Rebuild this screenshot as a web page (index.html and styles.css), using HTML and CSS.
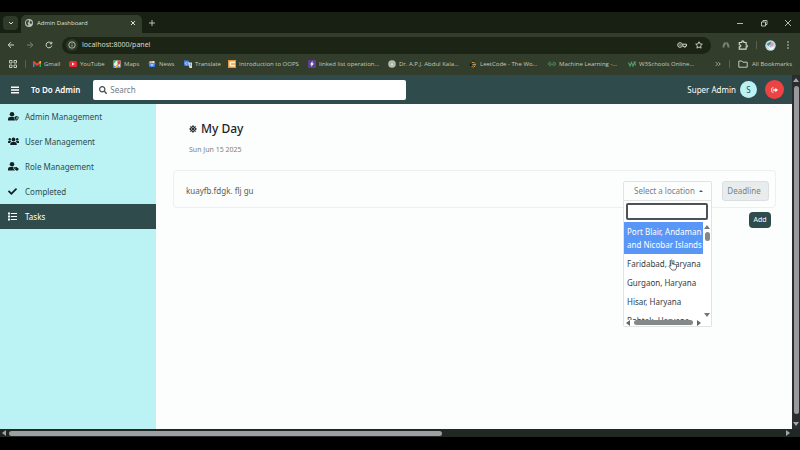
FILE: index.html
```html
<!DOCTYPE html>
<html lang="en">
<head>
<meta charset="utf-8">
<title>Admin Dashboard</title>
<link rel="stylesheet" href="styles.css">
</head>
<body>
<div class="window">
  <div class="tabstrip">
    <button class="tab-search" aria-label="Search tabs"><svg class="i8" viewBox="0 0 8 8"><path class="ln" d="M2 3l2 2 2-2"/></svg></button>
    <div class="tab">
      <svg class="i8" viewBox="0 0 16 16"><circle cx="8" cy="8" r="8" fill="#b9c2b6"/><path d="M3 3l4-1 1 3-3 3 2 3-1 3-4-4 0-4zM10 2l4 4-1 4-3-1-1-3 2-1z" fill="#3b4536"/></svg>
      <span class="tab-title">Admin Dashboard</span>
      <button class="plain" aria-label="Close tab"><svg class="i8" viewBox="0 0 8 8"><path class="ln" d="M2 2l4 4M6 2l-4 4"/></svg></button>
    </div>
    <button class="plain" aria-label="New tab"><svg class="i8" viewBox="0 0 8 8"><path class="ln thin" d="M4 1v6M1 4h6"/></svg></button>
    <div class="window-controls">
      <button class="plain" aria-label="Minimize"><svg class="i8" viewBox="0 0 8 8"><path class="ln thin" d="M1 4.500h6"/></svg></button>
      <button class="plain" aria-label="Restore"><svg class="i8" viewBox="0 0 8 8"><path class="ln thin" d="M1.500 3h4v4h-4zM3 3V1.500h4v4H5.500"/></svg></button>
      <button class="plain" aria-label="Close"><svg class="i8" viewBox="0 0 8 8"><path class="ln thin" d="M1 1l6 6M7 1l-6 6"/></svg></button>
    </div>
  </div>

  <div class="toolbar">
    <button class="plain" aria-label="Back"><svg class="i8" viewBox="0 0 8 8"><path class="ln" d="M7 4H1.500M4 1.200L1.200 4 4 6.800"/></svg></button>
    <button class="plain dim" aria-label="Forward"><svg class="i8" viewBox="0 0 8 8"><path class="ln" d="M1 4h5.500M4 1.200L6.800 4 4 6.800"/></svg></button>
    <button class="plain" aria-label="Reload"><svg class="i8" viewBox="0 0 8 8"><path class="ln" d="M6.400 2.300A2.900 2.900 0 1 0 6.800 4.700M6.800 .8v2H4.800"/></svg></button>
    <div class="address">
      <span class="site-info"><svg class="i8" viewBox="0 0 8 8"><circle class="ln thin" cx="4" cy="4" r="3.200"/><path class="ln thin" d="M4 3.600v2M4 2v.7"/></svg></span>
      <input class="url" type="text" aria-label="Address" value="localhost:8000/panel">
      <svg class="i10" viewBox="0 0 10 8"><circle class="ln" cx="3" cy="4" r="2.300"/><circle cx="3" cy="4" r=".8" fill="currentColor"/><path class="ln" d="M5.300 3.200H9.500V5H8.600V6H6.800V5H5.300"/></svg>
      <svg class="i8" viewBox="0 0 16 16"><path class="ln star" d="M8 1.500l2 4.300 4.600.6-3.400 3.200.9 4.700L8 12l-4.100 2.300.9-4.700L1.400 6.400 6 5.800z"/></svg>
    </div>
    <div class="extensions">
      <svg class="i8 dim" viewBox="0 0 8 8"><path d="M.5 6.500C.5 3 2 1 4 1s3.500 2 3.500 5.500H5.500C5.500 4.500 5 3.500 4 3.500s-1.500 1-1.500 3z" fill="currentColor"/><path d="M4 1v6" stroke="#333d2b" stroke-width=".6"/></svg>
      <svg class="puzzle" viewBox="0 0 16 16"><path class="ln star" d="M2 4h4V3a1.700 1.700 0 0 1 3.400 0v1H13v4h.5a1.500 1.500 0 0 1 0 3H13v3.500H2V11h.8a1.500 1.500 0 0 0 0-3.500H2z"/></svg>
      <span class="divider"></span>
      <svg class="i11" viewBox="0 0 11 11"><circle cx="5.500" cy="5.500" r="5.200" fill="#c4dfe0"/><path d="M1.500 4l4-2.500 1 2-3 2.500z" fill="#4c8e9a"/><path d="M6 2l3 1-1 3-3 1z" fill="#dc9db9"/><path d="M3 7l3 1 3-2-1 3-3 1z" fill="#f5fafa"/></svg>
      <button class="plain" aria-label="Menu"><svg class="i8" viewBox="0 0 8 8"><g fill="currentColor"><circle cx="4" cy="1" r=".8"/><circle cx="4" cy="4" r=".8"/><circle cx="4" cy="7" r=".8"/></g></svg></button>
    </div>
  </div>

  <nav class="bookmarks" aria-label="Bookmarks">
    <button class="plain apps" aria-label="Apps"><svg class="i8" viewBox="0 0 8 8"><path class="ln" d="M.5.5h2.500V3H.5zM5 .5h2.500V3H5zM.5 5h2.500v2.500H.5zM5 5h2.500v2.500H5z"/></svg></button>
    <span class="divider"></span>
    <div class="bookmark-list">
      <a href="#"><svg class="i8" viewBox="0 0 16 16"><path d="M0 3h3v11H0z" fill="#4285f4"/><path d="M13 3h3v11h-3z" fill="#34a853"/><path d="M0 3l2-1 6 5 6-5 2 1v3l-8 6-8-6z" fill="#ea4335"/><path d="M13 3l3-1v4l-3 2z" fill="#fbbc04"/></svg>Gmail</a>
      <a href="#"><svg class="i8" viewBox="0 0 16 16"><rect y="2" width="16" height="12" rx="3" fill="#f02834"/><path d="M6 5l5 3-5 3z" fill="#fff"/></svg>YouTube</a>
      <a href="#"><svg class="i8" viewBox="0 0 16 16"><path d="M1 1h14v14H1z" fill="#e9eee8"/><path d="M1 1h6L1 8z" fill="#34a853"/><path d="M2 15L14 3v4L6 15z" fill="#fbbc04"/><path d="M9 10l6 5H9zM1 9l4 5H1z" fill="#4285f4"/><path d="M11 10C7 5 9 1 12 1s5 4-1 9z" fill="#ea4335"/></svg>Maps</a>
      <a href="#"><svg class="i8" viewBox="0 0 16 16"><path d="M3 2h10v6H3z" fill="#d7e5ef"/><path d="M1 6h14l-2 8H3z" fill="#4285f4"/><path d="M4 2h5v3H4z" fill="#e89b41"/><path d="M5 9h6M6 11h4" stroke="#fff"/></svg>News</a>
      <a href="#"><svg class="i8" viewBox="0 0 16 16"><path d="M0 1h9l3 11H2L0 10z" fill="#4285f4"/><path d="M8 5h8v11h-5l-1-4z" fill="#d5e1ea"/><path d="M7 5H4.500A2 2 0 1 0 6.500 8H5" stroke="#fff" fill="none"/><path d="M11 8h4M13 7v1c0 2-1 4-2 4m1-3l3 4" stroke="#6c8192" fill="none"/></svg>Translate</a>
      <a href="#"><svg class="i8" viewBox="0 0 16 16"><path d="M0 0h16v16H0z" fill="#ea963b"/><path d="M3 3h11v3H6v4h8v3H3z" fill="#fff4d4"/><path d="M7 7h2v2H7zM11 7h2v2h-2z" fill="#fff"/></svg>Introduction to OOPS</a>
      <a href="#"><svg class="i8" viewBox="0 0 16 16"><rect width="16" height="16" rx="2" fill="#5c4193"/><path d="M9 2L4 9h3l-1 5 6-7H9z" fill="#fff"/></svg>linked list operation...</a>
      <a href="#"><svg class="i8" viewBox="0 0 16 16"><circle cx="8" cy="8" r="7.500" fill="#c9bda7"/><circle cx="8" cy="8" r="5" fill="#8eb5b5"/><path d="M5 11l3-7 3 7z" fill="#dfe2d9"/></svg>Dr. A.P.J. Abdul Kala...</a>
      <a href="#"><svg class="i8" viewBox="0 0 16 16"><path d="M10 1L4 7.500q-2 2 0 4L7 14q2 1 4-1" stroke="#10150c" stroke-width="2.500" fill="none"/><path d="M5 6l3-2q2 0 4 3M5 12l2 2q2 1 5-1.500" stroke="#eda33c" stroke-width="2" fill="none"/><path d="M7 9.500h7" stroke="#b7b9b2" stroke-width="2"/></svg>LeetCode - The Wo...</a>
      <a href="#"><svg class="i8" viewBox="0 0 16 16"><path d="M6 5C3 3 1 5 1 8h14c0-3-2-5-5-3M1 8c0 5 6 4 6 0m2 0c0 4 6 5 6 0" stroke="#4a8a59" stroke-width="1.800" fill="none"/></svg>Machine Learning -...</a>
      <a href="#"><svg class="i8" viewBox="0 0 16 16"><path d="M1 5l3 7 3-7 3 7 3-7M11 4h4l-2 3q3 1 1 4" stroke="#4b9d6b" stroke-width="2.200" fill="none"/></svg>W3Schools Online...</a>
    </div>
    <button class="plain more" aria-label="More bookmarks"><svg class="i6" viewBox="0 0 8 8"><path class="ln" d="M1 1.500L3.500 4 1 6.500M4.500 1.500L7 4 4.500 6.500"/></svg></button>
    <span class="divider"></span>
    <a class="all" href="#"><svg class="i10" viewBox="0 0 10 8"><path class="ln" d="M.8 1h3l1 1.200h4.400v5H.8z"/></svg>All Bookmarks</a>
  </nav>

  <div class="viewport">
    <div class="app">
      <header class="header">
        <button class="plain" aria-label="Toggle menu"><svg class="i8" viewBox="0 0 8 8"><path d="M0 .5h8V2H0zM0 3.200h8v1.500H0zM0 6h8v1.500H0z" fill="currentColor"/></svg></button>
        <span class="brand">To Do Admin</span>
        <label class="search">
          <svg class="i8" viewBox="0 0 512 512"><path fill="currentColor" d="M505 442.700L405.300 343c-4.500-4.500-10.600-7-17-7H372c27.600-35.300 44-79.700 44-128C416 93.100 322.900 0 208 0S0 93.100 0 208s93.100 208 208 208c48.300 0 92.700-16.400 128-44v16.300c0 6.400 2.500 12.500 7 17l99.700 99.700c9.400 9.400 24.600 9.400 33.900 0l28.300-28.300c9.400-9.400 9.400-24.600.1-34zM208 336c-70.700 0-128-57.200-128-128 0-70.700 57.200-128 128-128 70.700 0 128 57.200 128 128 0 70.700-57.200 128-128 128z"/></svg>
          <input type="search" placeholder="Search" aria-label="Search">
        </label>
        <span class="user">Super Admin</span>
        <span class="avatar">S</span>
        <button class="logout" aria-label="Log out"><svg class="i7" viewBox="0 0 16 14"><path d="M6 2H3Q1.500 2 1.500 3.500v7Q1.500 12 3 12h3" fill="none" stroke="currentColor" stroke-width="2"/><path d="M5 5h5V2l6 5-6 5V9H5z" fill="currentColor"/></svg></button>
      </header>
      <div class="body">
        <nav class="sidebar" aria-label="Main">
          <a href="#"><svg class="nav-icon" viewBox="0 0 22 18"><circle cx="8" cy="4.500" r="4.500" fill="currentColor"/><path d="M0 17v-3q0-4 4-4h7.500q0 5 4 7z" fill="currentColor"/><path d="M17 8l4.500 2q0 5-4.500 7.500-4.500-2.500-4.500-7.500z" fill="currentColor"/><path d="M17 10v5.500q2.500-1.500 2.500-4.300z" fill="#bbf2f3"/></svg>Admin Management</a>
          <a href="#"><svg class="nav-icon" viewBox="0 0 22 18"><g fill="currentColor"><circle cx="3.500" cy="4.500" r="2.400"/><circle cx="18.500" cy="4.500" r="2.400"/><circle cx="11" cy="5" r="3.800"/><path d="M0 12V10q0-2.500 2.500-2.500H5q1 0 1.800.8Q4.500 9.500 4 12zM22 12V10q0-2.500-2.500-2.500H17q-1 0-1.800.8Q17.500 9.500 18 12zM4.500 16v-2q0-4 4-4h5q4 0 4 4v2z"/></g></svg>User Management</a>
          <a href="#"><svg class="nav-icon" viewBox="0 0 22 18"><g fill="currentColor"><circle cx="8" cy="4.500" r="4.500"/><path d="M0 17v-3q0-4 4-4h7v4l3 3z"/><path d="M12.500 10h4.500l5 4-4 4-5.500-4z"/></g><circle cx="14.500" cy="12" r=".9" fill="#bbf2f3"/></svg>Role Management</a>
          <a href="#"><svg class="nav-icon narrow" viewBox="0 0 512 512"><path fill="currentColor" d="M173.900 439.400l-166.400-166.400c-10-10-10-26.200 0-36.200l36.200-36.200c10-10 26.200-10 36.200 0L192 312.700 432.100 72.600c10-10 26.200-10 36.200 0l36.200 36.200c10 10 10 26.200 0 36.200l-294.400 294.400c-10 10-26.200 10-36.200 0z"/></svg>Completed</a>
          <a class="active" href="#" aria-current="page"><svg class="nav-icon narrow" viewBox="0 0 16 16"><path fill="currentColor" d="M0 1h3.500v3.500H0zM0 6.200h3.500v3.500H0zM0 11.500h3.500V15H0zM5 1.700h11v2H5zM5 7h11v2H5zM5 12.300h11v2H5z"/></svg>Tasks</a>
        </nav>
        <main class="main">
          <div class="intro">
            <h1><svg class="i8" viewBox="0 0 16 16"><circle cx="8" cy="8" r="5" fill="none" stroke="currentColor" stroke-width="2"/><path d="M8 0v16M0 8h16M2.500 2.500l11 11M13.500 2.500l-11 11" stroke="currentColor" stroke-width="1.600"/></svg>My Day</h1>
            <p>Sun Jun 15 2025</p>
          </div>
          <form class="task">
            <input class="task-name" type="text" aria-label="Task" value="kuayfb.fdgk. flj gu">
            <div class="picker">
              <button class="picker-toggle" type="button" aria-expanded="true">Select a location<svg class="caret" viewBox="0 0 4 4"><path d="M0 3h4L2 1z" fill="currentColor"/></svg></button>
              <div class="dropdown">
                <input class="filter" type="text" aria-label="Filter locations">
                <div class="list-area">
                  <ul class="options" role="listbox" aria-label="Locations">
                    <li class="selected" role="option" aria-selected="true">Port Blair, Andaman and Nicobar Islands</li>
                    <li role="option">Faridabad, Haryana</li>
                    <li role="option">Gurgaon, Haryana</li>
                    <li role="option">Hisar, Haryana</li>
                    <li role="option">Rohtak, Haryana</li>
                  </ul>
                  <div class="vbar">
                    <svg class="i6" viewBox="0 0 6 6"><path d="M0 5h6L3 1z" fill="currentColor"/></svg>
                    <span class="list-thumb"></span>
                    <svg class="i6 end" viewBox="0 0 6 6"><path d="M0 1h6L3 5z" fill="currentColor"/></svg>
                  </div>
                </div>
                <div class="hbar">
                  <svg class="i6" viewBox="0 0 6 6"><path d="M5 0v6L1 3z" fill="currentColor"/></svg>
                  <span class="row-thumb"></span>
                  <svg class="i6" viewBox="0 0 6 6"><path d="M1 0v6l4-3z" fill="currentColor"/></svg>
                </div>
                <svg class="pointer" viewBox="0 0 16 20"><path d="M5 12V2.500q0-1.500 1.200-1.500T7.500 2.500V8l6 1.200q1.500.3 1.500 2V15l-2 4H7l-5-6q-.5-2 1-2z" fill="#fff" stroke="#333" stroke-width="1.200"/></svg>
              </div>
            </div>
            <button class="deadline" type="button">Deadline</button>
          </form>
          <button class="add" type="button">Add</button>
        </main>
      </div>
    </div>
    <div class="page-vbar">
      <svg class="i6" viewBox="0 0 6 6"><path d="M0 5h6L3 1z" fill="currentColor"/></svg>
      <span class="page-vthumb"></span>
      <svg class="i6" viewBox="0 0 6 6"><path d="M0 1h6L3 5z" fill="currentColor"/></svg>
    </div>
  </div>
  <div class="page-hbar">
    <svg class="i6" viewBox="0 0 6 6"><path d="M5 0v6L1 3z" fill="currentColor"/></svg>
    <span class="track"><span class="page-hthumb"></span></span>
    <svg class="i6" viewBox="0 0 6 6"><path d="M1 0v6l4-3z" fill="currentColor"/></svg>
  </div>
</div>
</body>
</html>
```
FILE: styles.css
```css
* { box-sizing: border-box; }
body { margin: 0; background: #000; font-family: "Noto Sans", "Open Sans", sans-serif; font-size: 8px; line-height: 12px; color: #343c40; }
button, input { font: inherit; color: inherit; margin: 0; padding: 0; border: 0; background: none; min-width: 0; }
a { color: inherit; text-decoration: none; }
svg { display: block; flex: none; }
.ln { fill: none; stroke: currentColor; stroke-width: 1; }
.thin { stroke-width: 0.8; }
.star { stroke-width: 1.8; }
.i6 { width: 6px; height: 6px; }
.i7 { width: 7px; height: 6px; }
.i8 { width: 8px; height: 8px; }
.i10 { width: 10px; height: 8px; }
.i11 { width: 11px; height: 11px; }
.puzzle { width: 10px; height: 10px; }
.plain { display: flex; align-items: center; }
.dim { opacity: 0.45; }
.divider { width: 1px; height: 8px; background: #556153; flex: none; }

.window { display: flex; flex-direction: column; height: 100vh; padding: 12px 0 13px; }

.tabstrip { display: flex; align-items: center; gap: 6px; height: 21px; flex: none; padding-left: 3px; background: #172012; color: #dce1d8; }
.tab-search { display: flex; align-items: center; justify-content: center; width: 15px; height: 14px; border-radius: 4px; background: #303a28; }
.tab { display: flex; align-items: center; gap: 4px; width: 121px; height: 18px; margin: 3px 0 0 -3px; padding: 0 5px 2px 4px; border-radius: 5px 5px 0 0; background: #333d2b; font-family: "Open Sans", sans-serif; font-size: 6px; }
.tab-title { flex: 1; }
.window-controls { display: flex; gap: 16px; margin-left: auto; padding-right: 8px; }

.toolbar { display: flex; align-items: center; gap: 11px; height: 24px; flex: none; padding: 0 8px 0 7px; background: #333d2b; color: #d3dbce; }
.address { display: flex; align-items: center; gap: 8px; flex: 1; height: 17px; margin-left: -2px; padding: 0 8px 0 4px; border-radius: 9px; background: #1c2515; }
.site-info { display: flex; align-items: center; justify-content: center; width: 12px; height: 12px; border-radius: 6px; background: #303a28; }
.url { flex: 1; margin-left: -4px; font-size: 7px; }
.extensions { display: flex; align-items: center; gap: 8px; }

.bookmarks { display: flex; align-items: center; height: 18px; flex: none; padding: 0 8px 4px 9px; background: #333d2b; color: #c2cabd; font-family: "Open Sans", sans-serif; font-size: 6px; }
.apps { margin-right: 8px; }
.bookmark-list { display: grid; grid-template-columns: 36px 44px 35px 36px 44px 80px 80px 81px 79px 80px auto; flex: 1; margin-left: 7px; }
.bookmarks a { display: flex; align-items: center; gap: 4px; white-space: nowrap; }
.bookmark-list a { gap: 3px; }
.more { margin-right: 8px; }
.divider + .all { margin-left: 8px; }

.viewport { display: flex; flex: 1; min-height: 0; }
.app { display: flex; flex-direction: column; flex: 1; min-width: 0; background: #fcfdfd; }
.header { display: flex; align-items: center; height: 29px; flex: none; padding: 0 8px 0 11px; background: #304b4c; color: #fff; }
.brand { margin: 0 13px 0 12px; font-weight: 600; }
.search { display: flex; align-items: center; gap: 3px; flex: 0 1 313px; height: 20px; padding: 0 6px; border-radius: 2px; background: #fff; color: #45494b; }
.search input { flex: 1; outline: 0; }
.search input::placeholder { color: #737b7e; opacity: 1; }
.user { margin-left: auto; }
.avatar { display: flex; align-items: center; justify-content: center; width: 17px; height: 17px; margin: 0 8px 0 4px; border-radius: 50%; background: #bbf2f3; color: #304b4c; }
.logout { display: flex; align-items: center; justify-content: center; width: 19px; height: 19px; border-radius: 50%; background: #ee4343; color: #fff; }

.body { display: flex; flex: 1; min-height: 0; }
.sidebar { width: 156px; flex: none; background: #bbf2f3; color: #304b4c; }
.sidebar a { display: flex; align-items: center; gap: 6px; height: 25px; padding-left: 8px; }
.nav-icon { width: 11px; height: 9px; color: #142124; }
.narrow { width: 9px; margin-right: 2px; }
.sidebar .active { background: #304b4c; color: #fff; }
.active .nav-icon { color: #fff; }

.main { display: flex; flex-direction: column; flex: 1; min-width: 0; padding: 16px 16px 0 17px; }
.intro { padding-left: 16px; }
.intro h1 { display: flex; align-items: center; gap: 4px; margin: 0; font-size: 12px; line-height: 18px; font-weight: 500; color: #1c2427; }
.intro p { margin: 6px 0 14px; font-size: 7px; color: #7a8285; }
.task { display: flex; align-items: center; gap: 10px; height: 38px; padding: 3px 6px 0 12px; border: 1px solid #edf0f0; border-radius: 4px; }
.task-name { flex: 1; color: #555d60; }
.picker { position: relative; width: 89px; }
.picker-toggle { display: flex; align-items: center; justify-content: space-between; width: 100%; height: 20px; padding: 0 8px 0 10px; border: 1px solid #dfe3e4; border-radius: 2px 2px 0 0; color: #777f83; }
.caret { width: 4px; height: 4px; color: #555; }
.dropdown { position: absolute; top: 20px; left: 0; width: 100%; padding-top: 2px; border: 1px solid #dfe3e4; border-top: 0; border-radius: 0 0 2px 2px; background: #fff; }
.filter { display: block; width: 82px; height: 17px; margin: 0 0 2px 2px; padding: 0 3px; border: 2px solid #4c5255; border-radius: 2px; background: #fff; }
.list-area { display: flex; height: 98px; }
.options { flex: 1; margin: 0; padding: 0; list-style: none; overflow: hidden; line-height: 13px; }
.options li { padding: 3px 0 3px 3px; white-space: nowrap; }
.options .selected { background: #5897f5; color: #fff; white-space: normal; }
.vbar { display: flex; flex-direction: column; align-items: center; gap: 2px; width: 8px; padding: 2px 0; color: #777; }
.list-thumb { width: 5px; height: 9px; border-radius: 3px; background: #85888b; }
.end { margin-top: auto; }
.hbar { display: flex; align-items: center; gap: 3px; height: 6px; padding: 0 9px 0 1px; color: #666; }
.row-thumb { flex: 1; height: 5px; border-radius: 3px; background: #85888b; }
.pointer { position: absolute; top: 58px; left: 44px; width: 9px; height: 12px; }
.deadline { width: 47px; height: 20px; padding-right: 3px; border: 1px solid #dadfe1; border-radius: 3px; background: #e9eced; color: #777f83; }
.add { align-self: flex-end; width: 22px; height: 16px; margin: 4px 5px 0 0; border-radius: 4px; background: #304b4c; color: #fff; font-size: 7px; }

.page-vbar { display: flex; flex-direction: column; align-items: center; gap: 3px; width: 8px; padding: 2px 0; background: #292d2e; color: #a6a6aa; }
.page-vthumb { flex: 1; width: 5px; max-height: 328px; margin-bottom: auto; border-radius: 3px; background: #98989d; }
.page-hbar { display: flex; align-items: center; gap: 2px; height: 8px; flex: none; padding: 0 9px 0 1px; background: #202823; color: #a6a6aa; }
.track { flex: 1; }
.page-hthumb { display: block; width: 56%; height: 5px; border-radius: 3px; background: #9d9fa3; }
```
